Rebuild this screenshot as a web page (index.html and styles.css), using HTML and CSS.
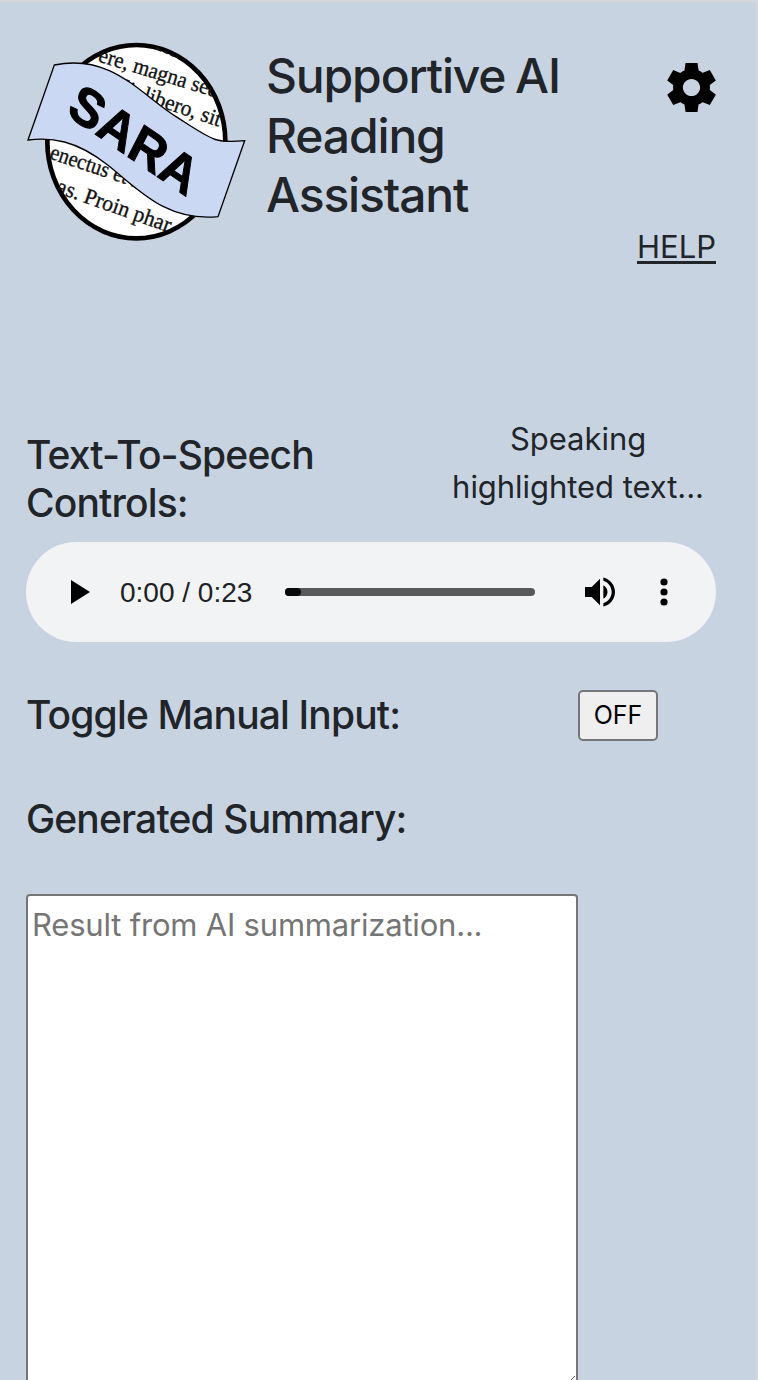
FILE: index.html
```html
<!DOCTYPE html>
<html lang="en">
<head>
<meta charset="utf-8">
<title>SARA</title>
<link rel="stylesheet" href="styles.css">
</head>
<body>
<main class="panel">
  <header class="header">
    <svg class="logo" viewBox="0 0 720 660" role="img" aria-label="SARA logo">
      <defs><clipPath id="lens"><ellipse cx="361" cy="335" rx="270" ry="293"/></clipPath></defs>
      <ellipse cx="361" cy="335" rx="267" ry="290" fill="#fff" stroke="#000" stroke-width="14"/>
      <g clip-path="url(#lens)" class="logo-print">
        <path d="M420 54l16 8M444 64l12 5M464 73l10 4" fill="none" stroke="#111" stroke-width="8"/>
        <text transform="translate(244 94) rotate(17)" textLength="374" lengthAdjust="spacingAndGlyphs">ere, magna sed</text>
        <text transform="translate(300 187) rotate(18.5)" textLength="325" lengthAdjust="spacingAndGlyphs">di, libero, sit</text>
        <text transform="translate(98 385) rotate(18.5)" textLength="334" lengthAdjust="spacingAndGlyphs">enectus et ma</text>
        <text transform="translate(118 487) rotate(19.5)" textLength="360" lengthAdjust="spacingAndGlyphs">as. Proin phar</text>
      </g>
      <path d="M115 105C285 70 370 190 480 260S595 341 686 332L606 560C450 575 370 480 275 405S105 321 36 330Z" fill="#cbd8f3" stroke="#000" stroke-width="4"/>
      <text class="logo-name" transform="matrix(.825 .565 -.458 .889 148 252)" textLength="442" lengthAdjust="spacingAndGlyphs">SARA</text>
    </svg>
    <h1 class="title">Supportive AI<br>Reading<br>Assistant</h1>
    <nav class="actions">
      <svg class="gear" viewBox="0 0 24 24" role="img" aria-label="Settings"><path d="M19.44 12.99l-.01.02c.04-.33.08-.67.08-1.01 0-.34-.03-.66-.07-.99l.01.02 2.44-1.92-2.43-4.22-2.87 1.16.01.01c-.52-.4-1.09-.74-1.71-1h.01L14.44 2H9.57l-.44 3.07h.01c-.62.26-1.19.6-1.71 1l.01-.01-2.88-1.17-2.44 4.22 2.44 1.92.01-.02c-.04.33-.07.65-.07.99 0 .34.03.68.08 1.01l-.01-.02-2.1 1.65-.33.26 2.43 4.2 2.88-1.15-.02-.04c.53.41 1.1.75 1.73 1.01h-.03L9.58 22h4.85s.03-.18.06-.42l.38-2.65h-.01c.62-.26 1.2-.6 1.73-1.01l-.02.04 2.88 1.15 2.43-4.2s-.14-.12-.33-.26l-2.11-1.66zM12 15.5c-1.93 0-3.5-1.57-3.5-3.5s1.57-3.5 3.5-3.5 3.5 1.57 3.5 3.5-1.57 3.5-3.5 3.5z"/></svg>
      <a class="help">HELP</a>
    </nav>
  </header>

  <section class="speech">
    <h2 class="heading">Text-To-Speech<br>Controls:</h2>
    <p class="status"><span class="status-top">Speaking</span><br>highlighted text...</p>
  </section>

  <div class="player">
    <svg class="play" viewBox="0 0 19 24"><path d="M0 0L19 12L0 24Z"/></svg>
    <span class="time">0:00 / 0:23</span>
    <div class="track"><div class="thumb"></div></div>
    <svg class="volume" viewBox="3 3 18 18"><path d="M3 9v6h4l5 5V4L7 9H3zm13.5 3c0-1.77-1.02-3.29-2.5-4.03v8.05c1.48-.73 2.5-2.25 2.5-4.02zM14 3.23v2.06c2.89.86 5 3.54 5 6.71s-2.11 5.85-5 6.71v2.06c4.01-.91 7-4.49 7-8.77s-2.99-7.86-7-8.77z"/></svg>
    <svg class="more" viewBox="0 0 8 28"><circle cx="4" cy="4" r="3.6"/><circle cx="4" cy="14" r="3.6"/><circle cx="4" cy="24" r="3.6"/></svg>
  </div>

  <section class="toggle">
    <h2 class="heading toggle-label">Toggle Manual Input:</h2>
    <button class="switch">OFF</button>
  </section>

  <h2 class="heading summary">Generated Summary:</h2>
  <textarea class="result" placeholder="Result from AI summarization..."></textarea>
</main>
</body>
</html>
```
FILE: styles.css
```css
* { box-sizing: border-box; }
body {
  margin: 0;
  background: #c8d3e1;
  color: #212529;
  font-family: Inter, "Liberation Sans", sans-serif;
}
.panel {
  height: 1380px;
  overflow: hidden;
  padding: 28px 40px 0 26px;
  border-top: 2px solid #d5d8da;
  border-right: 2px solid #d5d8da;
}
.header { display: flex; height: 385px; }
.logo { width: 240px; height: 220px; margin-left: -10px; flex: none; }
.logo-print { font: 67px "Liberation Serif", serif; fill: #111; stroke: #111; stroke-width: 1; }
.logo-name { font: bold 156px "Liberation Sans", sans-serif; stroke: #000; stroke-width: 3; }
.title {
  margin: 16px 0 0 10px;
  font-size: 48px;
  font-weight: 500;
  line-height: 59.5px;
  letter-spacing: -1.15px;
  word-spacing: -2px;
  white-space: nowrap;
}
.actions {
  display: flex;
  flex-direction: column;
  align-items: flex-end;
  margin-left: auto;
}
.gear { width: 59px; height: 59px; margin: 27.5px -4.5px 0 0; }
.help {
  margin-top: 106.5px;
  font-size: 31px;
  line-height: 48px;
  text-decoration: underline;
  text-decoration-thickness: 3px;
  text-underline-offset: 3px;
}
.speech { display: flex; justify-content: space-between; height: 127px; }
.heading {
  margin: 0;
  font-size: 39px;
  font-weight: 500;
  line-height: 48px;
  letter-spacing: -0.85px;
  white-space: nowrap;
}
.speech .heading { padding-top: 16px; }
.status {
  margin: 0 12px 0 0;
  font-size: 31px;
  line-height: 48px;
  letter-spacing: -0.05px;
  text-align: center;
  white-space: nowrap;
}
.player {
  display: flex;
  align-items: center;
  width: 690px;
  height: 100px;
  padding: 0 48px 0 45px;
  border-radius: 50px;
  background: #f1f3f5;
}
.play { width: 19px; height: 24px; }
.time {
  width: 134px;
  margin-left: 30px;
  padding-top: 1px;
  color: #202124;
  font: 28px "Liberation Sans", sans-serif;
  white-space: nowrap;
}
.track { width: 250px; height: 8px; margin-left: 31px; border-radius: 4px; background: #595959; }
.thumb { width: 16px; height: 8px; border-radius: 4px; background: #0a0a0a; }
.volume { width: 30px; height: 30px; margin-left: 50px; }
.more { width: 8px; height: 28px; margin-left: 45px; }
.toggle { display: flex; align-items: center; margin-top: 47px; height: 52px; }
.toggle-label { width: 552px; }
.switch {
  width: 80px;
  height: 51px;
  padding: 0;
  border: 2px solid #767676;
  border-radius: 5px;
  background: #efefef;
  color: #000;
  font: 25px Inter, sans-serif;
}
.summary { margin-top: 54px; }
.result {
  display: block;
  width: 552px;
  height: 492px;
  margin-top: 51px;
  padding: 3px 4px;
  border: 2px solid #767676;
  border-radius: 4px;
  background: #fff;
  font: 31px/52px Inter, sans-serif;
  letter-spacing: -0.2px;
  resize: vertical;
}
.result::placeholder { color: #757575; }
```
